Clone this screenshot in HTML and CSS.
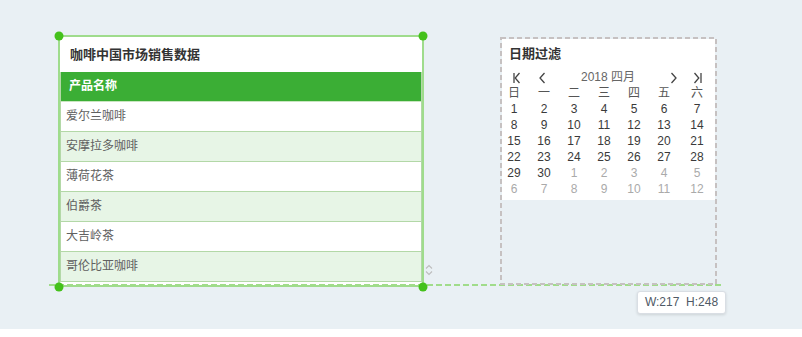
FILE: index.html
```html
<!DOCTYPE html>
<html lang="zh">
<head>
<meta charset="utf-8">
<title>Dashboard editor</title>
<link rel="stylesheet" href="styles.css">
</head>
<body>
<div class="canvas">
  <div class="table-widget">
    <div class="widget-title">咖啡中国市场销售数据</div>
    <div class="grid">
      <div class="grid-head">产品名称</div>
      <div class="grid-row">爱尔兰咖啡</div>
      <div class="grid-row alt">安摩拉多咖啡</div>
      <div class="grid-row">薄荷花茶</div>
      <div class="grid-row alt">伯爵茶</div>
      <div class="grid-row">大吉岭茶</div>
      <div class="grid-row alt">哥伦比亚咖啡</div>
    </div>
  </div>

  <div class="guide-h"></div>

  <span class="handle h-tl"></span>
  <span class="handle h-tr"></span>
  <span class="handle h-bl"></span>
  <span class="handle h-br"></span>

  <svg class="sort-icon" width="10" height="14" viewBox="0 0 10 14">
    <path d="M2 5.5 L5 2.5 L8 5.5" fill="none" stroke="#bdbdbd" stroke-width="1.1"/>
    <path d="M2 8.5 L5 11.5 L8 8.5" fill="none" stroke="#bdbdbd" stroke-width="1.1"/>
  </svg>

  <div class="cal-widget">
    <svg class="cal-border" width="217" height="248" viewBox="0 0 217 248">
      <rect x="1" y="1" width="215" height="246" fill="none" stroke="#c6c1c1" stroke-width="2" stroke-dasharray="5 3"/>
    </svg>
    <div class="cal-body">
      <div class="cal-title">日期过滤</div>
      <div class="cal-nav">
        <svg class="nav-icon first" width="8" height="12" viewBox="0 0 8 12">
          <path d="M2 1 V11" stroke="#444" stroke-width="1.3" fill="none"/>
          <path d="M7.5 1 L3.2 6 L7.5 11" stroke="#444" stroke-width="1.3" fill="none"/>
        </svg>
        <svg class="nav-icon prev" width="8" height="12" viewBox="0 0 8 12">
          <path d="M6.5 1 L2 6 L6.5 11" stroke="#444" stroke-width="1.3" fill="none"/>
        </svg>
        <span class="cal-month">2018 四月</span>
        <svg class="nav-icon next" width="8" height="12" viewBox="0 0 8 12">
          <path d="M1.5 1 L6 6 L1.5 11" stroke="#444" stroke-width="1.3" fill="none"/>
        </svg>
        <svg class="nav-icon last" width="8" height="12" viewBox="0 0 8 12">
          <path d="M0.5 1 L4.8 6 L0.5 11" stroke="#444" stroke-width="1.3" fill="none"/>
          <path d="M7 1 V11" stroke="#444" stroke-width="1.3" fill="none"/>
        </svg>
      </div>
      <div class="cal-grid">
        <span class="wd">日</span><span class="wd">一</span><span class="wd">二</span><span class="wd">三</span><span class="wd">四</span><span class="wd">五</span><span class="wd">六</span>
        <span>1</span><span>2</span><span>3</span><span>4</span><span>5</span><span>6</span><span>7</span>
        <span>8</span><span>9</span><span>10</span><span>11</span><span>12</span><span>13</span><span>14</span>
        <span>15</span><span>16</span><span>17</span><span>18</span><span>19</span><span>20</span><span>21</span>
        <span>22</span><span>23</span><span>24</span><span>25</span><span>26</span><span>27</span><span>28</span>
        <span>29</span><span>30</span><span class="other">1</span><span class="other">2</span><span class="other">3</span><span class="other">4</span><span class="other">5</span>
        <span class="other">6</span><span class="other">7</span><span class="other">8</span><span class="other">9</span><span class="other">10</span><span class="other">11</span><span class="other">12</span>
      </div>
    </div>
  </div>

  <div class="size-tip">W:217&nbsp; H:248</div>
</div>
</body>
</html>
```

FILE: styles.css
```css
html, body {
  margin: 0;
  padding: 0;
  background: #ffffff;
}

body {
  font-family: "Liberation Sans", "Noto Sans CJK SC", sans-serif;
}

.canvas {
  position: relative;
  width: 802px;
  height: 329px;
  background: #e9f0f4;
  overflow: hidden;
}

/* ---------- table widget ---------- */
.table-widget {
  position: absolute;
  left: 58px;
  top: 35px;
  width: 366px;
  height: 252px;
  box-sizing: border-box;
  border: 2px solid #9fdc8c;
  background: #ffffff;
  padding-bottom: 3px;
}

.widget-title {
  height: 35px;
  line-height: 35px;
  padding-left: 10px;
  font-size: 13px;
  font-weight: bold;
  color: #333333;
}

.grid {
  border-left: 1px solid #b3d8a7;
  border-right: 1px solid #b3d8a7;
}

.grid-head,
.grid-row {
  box-sizing: border-box;
  height: 30px;
  line-height: 29px;
  border-bottom: 1px solid #b3d8a7;
  font-size: 12px;
}

.grid-head {
  background: #3bae35;
  color: #ffffff;
  font-weight: bold;
  padding-left: 8px;
  border-bottom-color: #c9e6c0;
}

.grid-row {
  color: #606060;
  padding-left: 5px;
  background: #ffffff;
}

.grid-row.alt {
  background: #e7f5e6;
}

.guide-h {
  position: absolute;
  left: 49px;
  top: 284px;
  width: 673px;
  height: 2px;
  background: repeating-linear-gradient(90deg, #a0dc8a 0 6px, transparent 6px 9px);
}

.handle {
  position: absolute;
  width: 9px;
  height: 9px;
  border-radius: 50%;
  background: #44c11b;
  transform: translate(-50%, -50%);
}

.h-tl { left: 59px; top: 36px; }
.h-tr { left: 423px; top: 36px; }
.h-bl { left: 59px; top: 287px; }
.h-br { left: 423px; top: 287px; }

.sort-icon {
  position: absolute;
  left: 424px;
  top: 263px;
}

/* ---------- calendar widget ---------- */
.cal-widget {
  position: absolute;
  left: 500px;
  top: 37px;
  width: 217px;
  height: 248px;
  box-sizing: border-box;
  padding: 2px;
}

.cal-border {
  position: absolute;
  left: 0;
  top: 0;
}

.cal-body {
  background: #ffffff;
  padding-bottom: 3px;
}

.cal-title {
  padding: 6px 0 0 7px;
  height: 18px;
  line-height: 18px;
  margin-bottom: 7px;
  font-size: 13px;
  font-weight: bold;
  color: #333333;
}

.cal-nav {
  display: flex;
  align-items: center;
  height: 15px;
}

.nav-icon { display: block; flex: none; }
.nav-icon.first { margin-left: 10px; }
.nav-icon.prev { margin-left: 18px; }
.nav-icon.last { margin-left: 16px; margin-right: 13px; }

.cal-month {
  flex: 1;
  text-align: center;
  font-size: 12px;
  line-height: 15px;
  color: #666666;
}

.cal-grid {
  display: grid;
  grid-template-columns: repeat(6, 30px) 1fr;
  margin-left: -3px;
  font-size: 12px;
  line-height: 16px;
  text-align: center;
  color: #3a3a3a;
}

.cal-grid .wd {
  color: #555555;
}

.cal-grid .other {
  color: #aaaaaa;
}

/* ---------- size tooltip ---------- */
.size-tip {
  position: absolute;
  left: 637px;
  top: 291px;
  width: 89px;
  height: 23px;
  box-sizing: border-box;
  border: 1px solid #d9dee4;
  border-radius: 3px;
  background: #ffffff;
  box-shadow: 0 1px 3px rgba(0, 0, 0, 0.12);
  font-size: 12px;
  line-height: 21px;
  text-align: center;
  color: #4f5a66;
  white-space: nowrap;
}
```
